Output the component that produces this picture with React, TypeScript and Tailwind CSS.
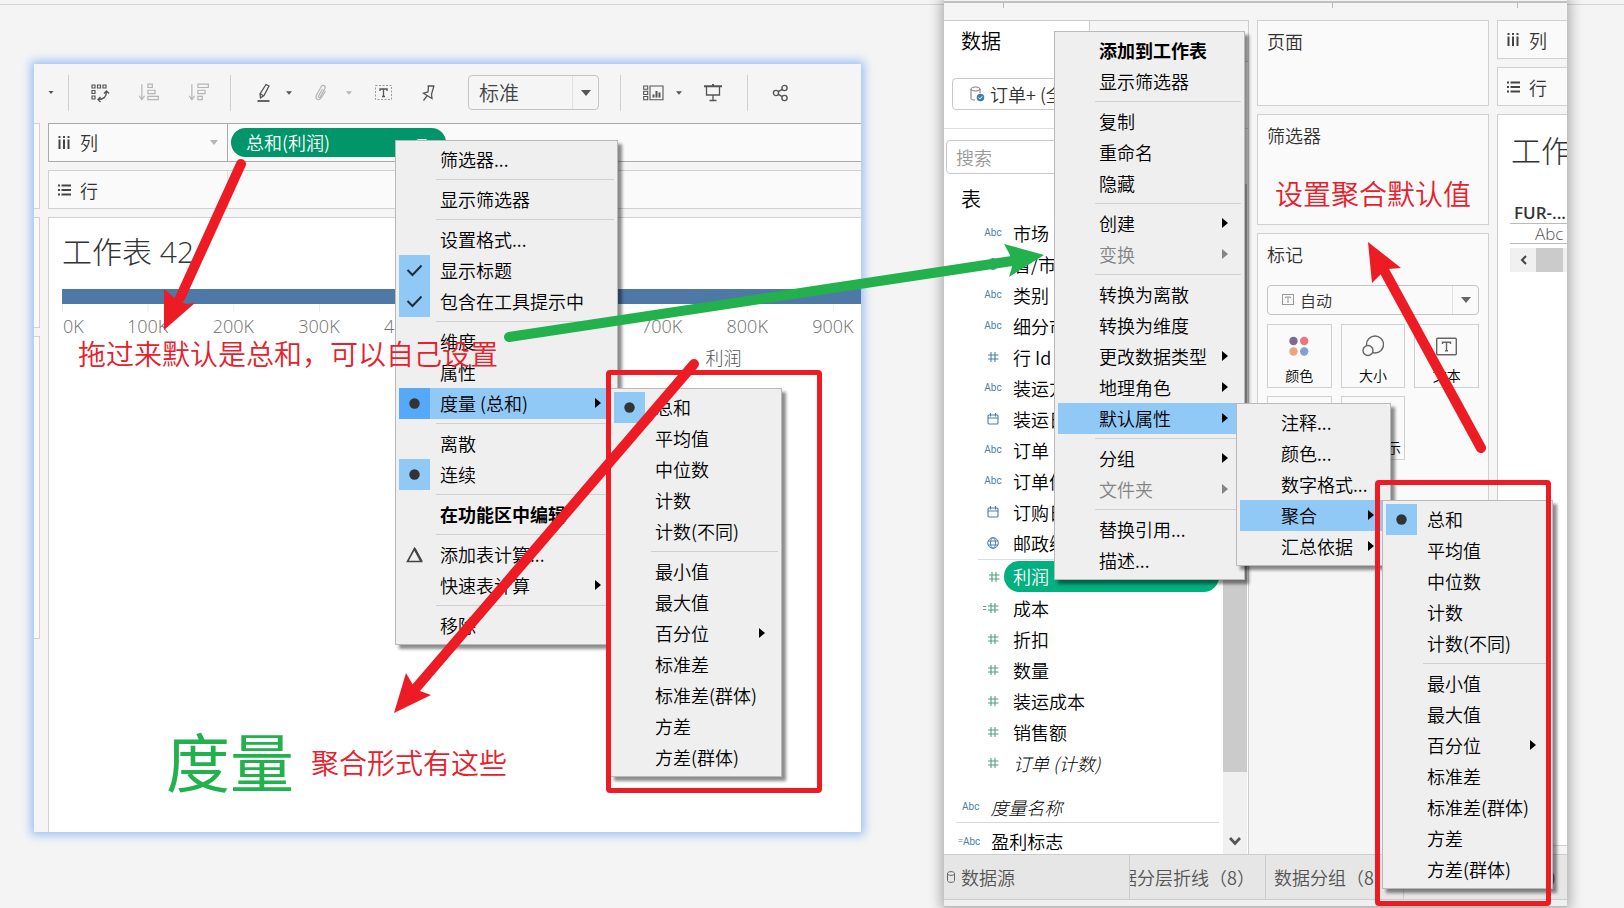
import React from 'react';

const abcBlue = '#4a7fa5';
const hashGreen = '#4fa080';

const aggregations: any[] = [
  { text: '总和', mark: 'dot' },
  { text: '平均值' },
  { text: '中位数' },
  { text: '计数' },
  { text: '计数(不同)' },
  null,
  { text: '最小值' },
  { text: '最大值' },
  { text: '百分位', sub: true },
  { text: '标准差' },
  { text: '标准差(群体)' },
  { text: '方差' },
  { text: '方差(群体)' },
];

const pillMenu: any[] = [
  { text: '筛选器...' },
  null,
  { text: '显示筛选器' },
  null,
  { text: '设置格式...' },
  { text: '显示标题', mark: 'check' },
  { text: '包含在工具提示中', mark: 'check' },
  null,
  { text: '维度' },
  { text: '属性' },
  { text: '度量 (总和)', mark: 'dot', sub: true, active: true },
  null,
  { text: '离散' },
  { text: '连续', mark: 'dot' },
  null,
  { text: '在功能区中编辑', bold: true },
  null,
  { text: '添加表计算...', mark: 'delta' },
  { text: '快速表计算', sub: true },
  null,
  { text: '移除' },
];

const fieldMenu: any[] = [
  { text: '添加到工作表', bold: true },
  { text: '显示筛选器' },
  null,
  { text: '复制' },
  { text: '重命名' },
  { text: '隐藏' },
  null,
  { text: '创建', sub: true },
  { text: '变换', sub: true, disabled: true },
  null,
  { text: '转换为离散' },
  { text: '转换为维度' },
  { text: '更改数据类型', sub: true },
  { text: '地理角色', sub: true },
  { text: '默认属性', sub: true, active: true },
  null,
  { text: '分组', sub: true },
  { text: '文件夹', sub: true, disabled: true },
  null,
  { text: '替换引用...' },
  { text: '描述...' },
];

const defaultsMenu: any[] = [
  { text: '注释...' },
  { text: '颜色...' },
  { text: '数字格式...' },
  { text: '聚合', sub: true, active: true },
  { text: '汇总依据', sub: true },
];

const dimensions = [
  ['abc', '市场'],
  ['globe', '省/市/自治区'],
  ['abc', '类别'],
  ['abc', '细分市场'],
  ['hash', '行 Id'],
  ['abc', '装运方式'],
  ['date', '装运日期'],
  ['abc', '订单 Id'],
  ['abc', '订单优先级'],
  ['date', '订购日期'],
  ['globe', '邮政编码'],
];

const measures = [
  ['calc', '成本'],
  ['hash', '折扣'],
  ['hash', '数量'],
  ['hash', '装运成本'],
  ['hash', '销售额'],
];

const Caret = ({ className = '' }: any) => (
  <svg viewBox="0 0 10 6" className={className} fill="currentColor"><path d="M0 0h10L5 6z" /></svg>
);

const Mark = ({ type }: any) => {
  switch (type) {
    case 'check':
      return <svg width="17" height="13" viewBox="0 0 17 13" fill="none" stroke="#1f2d3a" strokeWidth="2"><path d="M1.5 6l5 5L15.500 1.500" /></svg>;
    case 'dot':
      return <svg width="11" height="11" viewBox="0 0 11 11"><circle cx="5.500" cy="5.500" r="5.200" fill="#333" /></svg>;
    case 'delta':
      return <svg width="17" height="16" viewBox="0 0 17 16" fill="none" stroke="#444" strokeWidth="1.600"><path d="M8.500 1.500L15.500 14.500h-14z" /><path d="M8.500 1.500l7 13" strokeWidth="2.400" /></svg>;
    default:
      return null;
  }
};

const Menu = ({ items, label, className }: any) => (
  <div role="menu" aria-label={label} className={`absolute border border-[#b9b9b9] bg-[#efefef] p-[3px] shadow-[4px_4px_3px_rgba(0,0,0,0.45)] ${className}`}>
    {items.map((item: any, index: any) => {
      if (!item) {
        return <div key={index} role="separator" className="ml-[37px] flex h-[9px] items-center"><span className="h-px w-full bg-[#d0d0d0]" /></div>;
      }
      const markBg = !item.mark || item.mark === 'delta' ? '' : item.active ? 'bg-[#56a9f6]' : 'bg-[#90c8f6]';
      return (
        <button
          key={index}
          role="menuitem"
          disabled={item.disabled}
          className={`flex h-[31px] w-full items-center whitespace-nowrap text-left text-lg ${item.active ? 'bg-[#90c8f6]' : ''} ${item.disabled ? 'text-[#848484]' : 'text-black'} ${item.bold ? 'font-bold' : ''}`}
        >
          <span className={`flex size-[31px] shrink-0 items-center justify-center ${markBg}`}><Mark type={item.mark} /></span>
          <span className="ml-[10px] flex-1 pb-px">{item.text}</span>
          {item.sub && <svg width="6" height="10" viewBox="0 0 6 10" className="mr-[13px] mb-px shrink-0" fill="currentColor"><path d="M0 0l6 5-6 5z" /></svg>}
        </button>
      );
    })}
  </div>
);

const ColumnsIcon = () => (
  <svg width="12" height="13" viewBox="0 0 12 13" fill="#444">
    {[0.5, 5, 9.5].map((x) => <React.Fragment key={x}><rect x={x} y="0" width="2" height="2" /><rect x={x} y="3.500" width="2" height="9.500" /></React.Fragment>)}
  </svg>
);

const RowsIcon = () => (
  <svg width="13" height="12" viewBox="0 0 13 12" fill="#444">
    {[0.5, 5, 9.5].map((y) => <React.Fragment key={y}><rect x="0" y={y} width="2" height="2" /><rect x="3.500" y={y} width="9.500" height="2" /></React.Fragment>)}
  </svg>
);

const FieldIcon = ({ type, color }: any) => {
  if (type === 'abc') return <span className="font-[Roboto,sans-serif] text-[10px] font-normal" style={{ color }}>Abc</span>;
  if (type === 'date') {
    return <svg width="12" height="12" viewBox="0 0 12 12" fill="none" stroke={color} strokeWidth="1.100"><rect x="1" y="2" width="10" height="9" rx="1" /><path d="M1 5h10M3.500 0v3.500M8.500 0v3.500" /></svg>;
  }
  if (type === 'globe') {
    return <svg width="12" height="12" viewBox="0 0 12 12" fill="none" stroke={color}><circle cx="6" cy="6" r="5.300" /><ellipse cx="6" cy="6" rx="2.500" ry="5.300" /><path d="M1 4h10M1 8h10" /></svg>;
  }
  return (
    <svg width="16" height="12" viewBox="-4 0 16 12" className="-ml-1" fill="none" stroke={color} strokeWidth="1.100">
      <path d="M4 1v10M8 1v10M1 4h10.500M1 8h10.500" />
      {type === 'calc' && <path d="M-4 4.500h3M-4 7.500h3" />}
    </svg>
  );
};

const Field = ({ type, text, color }: any) => (
  <li className="flex h-[31px] items-center">
    <span className="flex w-[38px] shrink-0 justify-center"><FieldIcon type={type} color={color} /></span>
    <span className="ml-px whitespace-nowrap text-lg">{text}</span>
  </li>
);

const Divider = () => <div className="h-9 w-px shrink-0 bg-[#cfcfcf]" />;

const Toolbar = () => (
  <div className="flex h-[59px] items-center pb-[2px] text-[#555]">
    <Caret className="h-[3px] w-[6px]" />
    <div className="ml-[14px]"><Divider /></div>
    <div className="ml-[21px] flex items-center gap-7">
      <button aria-label="交换行和列">
        <svg width="20" height="20" viewBox="0 0 20 20" fill="none" stroke="currentColor" strokeWidth="1.200">
          <path d="M2 2h3v3H2zM7.500 2h3v3h-3zM13 2h3v3h-3zM2 7.500h3v3H2zM2 13h3v3H2z" /><path d="M16.500 8.500c0 5-3 8-8.500 8M14 10.500L16.500 8 19 10.500M10.500 14L8 16.500l2.500 2.500" strokeWidth="1.400" />
        </svg>
      </button>
      <button aria-label="升序排序" className="text-[#b5b5b5]">
        <svg width="22" height="22" viewBox="0 0 20 20" fill="none" stroke="currentColor" strokeWidth="1.100"><path d="M3.500 2v13M1 12.500L3.500 16 6 12.500M9 2h4v3H9zM9 7.500h6.500v3H9zM9 13h9.500v3H9z" /></svg>
      </button>
      <button aria-label="降序排序" className="text-[#b5b5b5]">
        <svg width="22" height="22" viewBox="0 0 20 20" fill="none" stroke="currentColor" strokeWidth="1.100"><path d="M3.500 2v13M1 12.500L3.500 16 6 12.500M9 2h9.500v3H9zM9 7.500h6.500v3H9zM9 13h4v3H9z" /></svg>
      </button>
    </div>
    <div className="ml-5"><Divider /></div>
    <button aria-label="突出显示" className="ml-6 flex items-center gap-[13px]">
      <svg width="18" height="20" viewBox="0 0 18 20" fill="none" stroke="currentColor" strokeWidth="1.300"><path d="M11 1.500l3 1.500-5 9.500-3.500 2.300-.5-4zM5 10.800l3.500 2" /><path d="M2.500 18h12" strokeWidth="1.800" /></svg>
      <Caret className="h-[4px] w-[6px]" />
    </button>
    <button aria-label="组成员" className="ml-5 flex items-center gap-4 text-[#b5b5b5]">
      <svg width="18" height="20" viewBox="0 0 18 20" fill="none" stroke="currentColor" strokeWidth="1.200"><path d="M10.500 6l-4 7c-.6 1.500 1 2.200 1.800.9l4.500-8c1.500-3-2-5-3.600-2.200L4.500 12c-2 4 2.500 6.500 5 2.500l4-6.500" /></svg>
      <Caret className="h-[4px] w-[6px]" />
    </button>
    <button aria-label="显示标记标签" className="ml-[22px]">
      <svg width="20" height="18" viewBox="0 0 20 18" fill="none" stroke="currentColor"><rect x="1.500" y="1.500" width="16" height="14" strokeDasharray="2 1.500" stroke="#999" /><path d="M6 7V5h7v2M9.500 5v7.500M8 12.500h3" strokeWidth="1.300" /></svg>
    </button>
    <button aria-label="固定轴" className="ml-[26px]">
      <svg width="18" height="18" viewBox="0 0 18 18" fill="none" stroke="currentColor" strokeWidth="1.300"><path d="M7.500 2h7M8.500 2.200L8 8 3.500 9.200l8.500 5.300-.5-4.200L13.800 2.200M7 11.800L3.500 16.500" /></svg>
    </button>
    <div className="relative ml-[30px]">
      <select aria-label="视图大小" className="h-[35px] w-[131px] appearance-none rounded-sm border border-[#c4c4c4] bg-transparent pl-[10px] text-xl text-[#444]">
        <option>标准</option>
      </select>
      <span className="pointer-events-none absolute inset-y-px right-px flex w-[26px] items-center justify-center border-l border-[#e2e2e2]"><Caret className="h-[6px] w-[10px]" /></span>
    </div>
    <div className="ml-[21px]"><Divider /></div>
    <button aria-label="显示/隐藏卡" className="ml-[22px] flex items-center gap-3">
      <svg width="21" height="16" viewBox="0 0 21 16" fill="none" stroke="currentColor" strokeWidth="1.100"><path d="M.7 1h4v3.200h-4zM.7 6.300h4v3.200h-4zM.7 11.500h4v3.200h-4zM7 1h13v13.700H7z" /><path d="M10.500 12.500v-3M13.500 12.500V6M16.500 12.500v-5" strokeWidth="2" /></svg>
      <Caret className="h-[4px] w-[6px]" />
    </button>
    <button aria-label="演示模式" className="ml-[22px]">
      <svg width="18" height="18" viewBox="0 0 18 18" fill="none" stroke="currentColor" strokeWidth="1.300"><path d="M2.500 2.500v8.500h13V2.500M9 11v5M5.500 16.500h7" /><path d="M0 2.300h18M9 0v2" strokeWidth="2" /></svg>
    </button>
    <div className="ml-[25px]"><Divider /></div>
    <button aria-label="共享" className="ml-6">
      <svg width="17" height="18" viewBox="0 0 17 18" fill="none" stroke="currentColor" strokeWidth="1.400"><circle cx="4" cy="9" r="2.600" /><circle cx="12.500" cy="4" r="2.600" /><circle cx="12.500" cy="14" r="2.600" /><path d="M6.300 7.700l4-2.400M6.300 10.300l4 2.400" /></svg>
    </button>
  </div>
);

const SheetWindow = () => (
  <section className="mt-16 flex min-w-0 flex-[827] self-start bg-[#f5f5f5] shadow-[0_0_9px_3px_rgba(120,175,245,0.75)]">
    <div className="mt-[59px] flex w-[6px] shrink-0 flex-col gap-2">
      <div className="h-[86px] border border-l-0 border-[#dccfc8] bg-[#fafafa]" />
      <div className="h-[111px] border border-l-0 border-[#dccfc8] bg-[#fafafa]" />
      <div className="h-[303px] border border-l-0 border-[#dccfc8] bg-[#fafafa]" />
    </div>
    <div className="ml-2 flex min-w-0 flex-1 flex-col">
      <Toolbar />
      <div className="flex h-[39px] items-stretch border border-r-0 border-[#aaa] bg-[#fafafa]">
        <div className="flex w-[179px] items-center border-r border-[#aaa] px-[9px]">
          <ColumnsIcon />
          <span className="ml-[10px] flex-1 pb-px text-lg text-[#333]">列</span>
          <Caret className="h-[5px] w-[8px] text-[#b5b5b5]" />
        </div>
        <div className="flex items-center pl-[3px]">
          <button className="flex h-[29px] w-[215px] items-center justify-between rounded-full bg-[#00966a] pb-px pl-[15px] pr-[19px] text-lg text-white">
            总和(利润)
            <Caret className="h-[6px] w-[10px]" />
          </button>
        </div>
      </div>
      <div className="mt-2 flex h-[39px] items-stretch border border-r-0 border-[#d0d0d0] bg-[#fafafa]">
        <div className="flex w-[179px] items-center border-r border-[#e2e2e2] pl-[9px]">
          <RowsIcon />
          <span className="ml-[9px] text-lg text-[#333]">行</span>
        </div>
      </div>
      <div className="mt-2 h-[615px] border-l border-t border-[#d0d0d0] bg-white pl-[13px] pt-[14px]">
        <h1 className="font-['Open_Sans','Noto_Sans_CJK_SC',sans-serif] text-[30px] leading-[40px] font-extralight text-[#333]">工作表 42</h1>
        <svg className="mt-[17px] h-[90px] w-full font-['Open_Sans','Noto_Sans_CJK_SC',sans-serif] text-lg font-light" fill="#707070">
          <path d="M.5 15v8" stroke="#e8e8e8" />
          {[1, 2, 3, 4, 5, 6, 7, 8, 9].map((n) => <rect key={n} x={`${n * 10.72}%`} y="15" width="1" height="8" fill="#eee" />)}
          <rect width="100%" height="15" fill="#4e79a7" />
          <text x="1" y="44">0K</text>
          {[1, 2, 3, 4, 7, 8, 9].map((n) => <text key={n} x={`${n * 10.72}%`} y="44" textAnchor="middle">{n}00K</text>)}
          <text x="82.800%" y="76" textAnchor="middle" fill="#555">利润</text>
        </svg>
      </div>
    </div>
  </section>
);

const MarkButton = ({ text, children }: any) => (
  <button className="flex h-16 flex-col items-center justify-between border border-[#d0d0d0] bg-[#fafafa] pb-[2px] pt-[10px] text-sm leading-[20px] text-black">
    {children}
    <span>{text}</span>
  </button>
);

const DataPane = () => (
  <aside className="flex w-[305px] shrink-0 flex-col border-r border-t border-[#ccc] bg-white">
    <div className="flex h-[41px] items-stretch">
      <h2 className="w-[146px] border-r border-[#ccc] pl-[17px] text-xl leading-[40px]">数据</h2>
      <span className="flex-1 border-b border-[#ccc] bg-[#f5f5f5]" />
    </div>
    <div className="border-b border-[#dedede] pb-[18px] pl-2 pr-2 pt-4">
      <button className="flex h-8 w-full items-center rounded-sm border border-[#c8c8c8] pl-[17px] text-lg text-[#333]">
        <svg width="15" height="16" viewBox="0 0 15 16" fill="none" stroke="#777"><path d="M1 3v9.500c0 1 2 1.500 4 1.500M1 3c0-1.200 2-2 4.500-2S10 1.800 10 3 8 5 5.500 5 1 4.200 1 3M10 3v4" /><circle cx="10.500" cy="11.500" r="3.800" fill="#3f7f9f" stroke="none" /><path d="M8.700 11.500l1.300 1.400 2.400-2.600" stroke="#fff" /></svg>
        <span className="ml-[5px]">订单+ (全球)</span>
      </button>
    </div>
    <div className="flex items-center pl-[2px] pr-2 pt-[11px]">
      <input aria-label="搜索" placeholder="搜索" className="h-[34px] w-full rounded-sm border border-[#c8c8c8] pl-[9px] text-lg placeholder:text-[#999]" />
    </div>
    <div className="mt-[10px] flex min-h-0 flex-1">
      <div className="min-w-0 flex-1">
        <h3 className="pl-[17px] text-xl leading-[30px]">表</h3>
        <ul className="ml-[30px] mt-[3px] h-[342px]">
          {dimensions.map(([type, text]) => <Field key={text} type={type} text={text} color={abcBlue} />)}
        </ul>
        <div className="ml-[34px] border-t border-[#d5dee2]" />
        <div className="ml-[30px] mt-px flex h-[31px] items-center">
          <span className="flex w-[30px] shrink-0 justify-end pr-1"><FieldIcon type="hash" color={hashGreen} /></span>
          <span className="flex h-[31px] w-[215px] items-center rounded-full bg-[#00b07f] pl-[9px] pb-px text-lg text-white">利润</span>
        </div>
        <ul className="ml-[30px]">
          {measures.map(([type, text]) => <Field key={text} type={type} text={text} color={hashGreen} />)}
          <Field type="hash" color={hashGreen} text={<em className="font-light">订单 (计数)</em>} />
        </ul>
        <div className="mr-1 ml-3 mt-[13px] border-b border-[#d8d8d8]">
          <div className="flex h-[31px] items-center pl-[6px]"><FieldIcon type="abc" color={abcBlue} /><em className="ml-[11px] text-lg font-light">度量名称</em></div>
        </div>
        <div className="ml-3 flex h-[30px] items-center pl-[2px] pt-[6px]">
          <span className="text-[9px]" style={{ color: abcBlue }}>=</span><FieldIcon type="abc" color={abcBlue} /><span className="ml-[11px] text-lg">盈利标志</span>
        </div>
      </div>
      <div className="mr-px flex w-6 flex-col bg-[#f0f0f0]">
        <span className="h-[588px] bg-[#cbcbcb]" />
        <svg width="12" height="10" viewBox="0 0 12 10" className="mx-auto mb-2 mt-auto" fill="none" stroke="#555" strokeWidth="2.800"><path d="M1 2l5 5.500L11 2" /></svg>
      </div>
    </div>
  </aside>
);

const Cards = () => (
  <div className="ml-2 flex w-[232px] shrink-0 flex-col gap-2 text-lg leading-[27px] text-[#333]">
    <div className="h-[86px] border border-[#d0d0d0] bg-[#fafafa] px-[9px] pt-[7px]">页面</div>
    <div className="h-[111px] border border-[#d0d0d0] bg-[#fafafa] px-[9px] pt-[7px]">筛选器</div>
    <div className="h-[322px] border border-[#d0d0d0] bg-[#fafafa] px-[9px] pt-[7px]">
      标记
      <div className="relative mt-[17px]">
        <select aria-label="标记类型" className="block h-[30px] w-full appearance-none rounded-sm border border-[#c4c4c4] bg-[#fafafa] pl-[32px] text-base leading-[20px] text-[#333]">
          <option>自动</option>
        </select>
        <svg width="12" height="11" viewBox="0 0 12 11" className="pointer-events-none absolute left-[15px] top-[9px]" fill="none" stroke="#999"><rect x=".5" y=".5" width="11" height="10" /><path d="M3.500 4V3h5v1M6 3v5M5 8h2" /></svg>
        <span className="pointer-events-none absolute inset-y-px right-px flex w-[26px] items-center justify-center border-l border-[#e2e2e2] text-[#666]"><Caret className="h-[6px] w-[10px]" /></span>
      </div>
      <div className="mt-[9px] grid grid-cols-3 gap-x-[9px] gap-y-2">
        <MarkButton text="颜色">
          <svg width="20" height="22" viewBox="0 0 20 22"><circle cx="4.500" cy="6" r="4.200" fill="#7b6a92" /><circle cx="15.200" cy="6" r="4.200" fill="#f0747d" /><circle cx="4.500" cy="16.500" r="4.200" fill="#f2a27c" /><circle cx="15.200" cy="16.500" r="4.200" fill="#7fa2d0" /></svg>
        </MarkButton>
        <MarkButton text="大小">
          <svg width="22" height="22" viewBox="0 0 22 22" fill="#fafafa" stroke="#666" strokeWidth="1.400"><circle cx="13" cy="9.500" r="8.500" /><circle cx="6" cy="15.500" r="5" /></svg>
        </MarkButton>
        <MarkButton text="文本">
          <svg width="21" height="22" viewBox="0 0 21 22" fill="none" stroke="#666" strokeWidth="1.400"><rect x=".7" y="3.200" width="19.600" height="16.500" rx="1" /><path d="M6.500 9V7.200h8V9M10.500 7.200v8.600M9 15.800h3" /></svg>
        </MarkButton>
        <MarkButton text="详细信息"><span /></MarkButton>
        <MarkButton text="工具提示"><span /></MarkButton>
      </div>
    </div>
  </div>
);

const PaneWindow = () => (
  <section className="mt-px flex min-w-0 flex-[623] flex-col overflow-hidden border-t-2 border-[#c0c0c0] bg-[#f5f5f5]">
    <div className="flex h-[17px] items-start">
      <span className="ml-[59px] h-[5px] w-px bg-[#bbb]" />
      <span className="ml-[328px] h-[5px] w-px bg-[#bbb]" />
      <span className="ml-[184px] h-[5px] w-px bg-[#bbb]" />
    </div>
    <div className="flex h-[834px]">
      <DataPane />
      <Cards />
      <div className="ml-2 flex min-w-0 flex-1 flex-col text-lg text-[#333]">
        <div className="flex h-[39px] items-center border border-r-0 border-[#d0d0d0] bg-[#fafafa] pl-[9px]"><ColumnsIcon /><span className="ml-[10px]">列</span></div>
        <div className="mt-2 flex h-[39px] items-center border border-r-0 border-[#d0d0d0] bg-[#fafafa] pl-[9px]"><RowsIcon /><span className="ml-[9px]">行</span></div>
        <div className="mb-2 mt-2 flex-1 overflow-hidden border border-r-0 border-[#d0d0d0] bg-white pl-3 pt-[14px] whitespace-nowrap">
          <h2 className="pl-px text-[30px] leading-[40px] font-extralight">工作表 43</h2>
          <div className="mt-[34px] border-b border-[#bbb] pl-1 text-[17px] leading-[20px] font-semibold font-['Open_Sans',sans-serif]">FUR-...</div>
          <div className="border-b border-[#bbb] pl-[25px] text-[17px] leading-[19px] font-light font-['Open_Sans',sans-serif] text-[#555]">Abc</div>
          <div className="mt-1 flex h-6 items-stretch bg-[#f0f0f0]">
            <span className="flex w-[26px] items-center justify-center"><svg width="7" height="10" viewBox="0 0 7 10" fill="none" stroke="#444" strokeWidth="2"><path d="M6 1L2 5l4 4" /></svg></span>
            <span className="w-[27px] bg-[#cbcbcb]" />
          </div>
        </div>
      </div>
    </div>
    <nav className="flex h-[46px] items-stretch border-y border-[#ccc] bg-[#e6e6e6] text-lg whitespace-nowrap text-[#555]">
      <a href="#source" className="flex w-[186px] shrink-0 items-center border-r border-[#ccc] pl-[3px]">
        <svg width="8" height="12" viewBox="0 0 8 12" fill="none" stroke="#666"><path d="M.5 2.500v7c0 2.500 7 2.500 7 0v-7M.5 2.500C.5 0 7.500 0 7.500 2.500S.5 5 .5 2.500" /></svg>
        <span className="ml-[6px]">数据源</span>
      </a>
      <a href="#layers" className="flex w-[136px] shrink-0 items-center justify-end overflow-hidden border-r border-[#ccc] pr-[10px]">据分层折线（8）</a>
      <a href="#groups" className="flex w-[138px] shrink-0 items-center overflow-hidden border-r border-[#ccc] pl-2">数据分组（8）</a>
      <a href="#next" className="flex flex-1 items-center justify-end">（8）</a>
    </nav>
    <div className="h-[7px] border-b border-[#bbb] bg-[#f0f0f0]" />
  </section>
);

const Annotations = () => (
  <>
    <p className="absolute left-[78px] top-[333px] whitespace-nowrap text-[28px] leading-[40px] text-[#e8202c]">拖过来默认是总和，可以自己设置</p>
    <p className="absolute left-[311px] top-[742px] whitespace-nowrap text-[28px] leading-[40px] text-[#e8202c]">聚合形式有这些</p>
    <p className="absolute left-[1275px] top-[173px] whitespace-nowrap text-[28px] leading-[40px] text-[#e8202c]">设置聚合默认值</p>
    <p className="absolute left-[166px] top-[714px] whitespace-nowrap text-[64px] leading-[90px] font-normal text-[#22b14c]">度量</p>
    <div className="absolute left-[606px] top-[370px] h-[423px] w-[216px] rounded-sm border-[5px] border-[#ed1c24]" />
    <div className="absolute left-[1375px] top-[480px] h-[426px] w-[176px] rounded-sm border-[5px] border-[#ed1c24]" />
    <svg className="pointer-events-none absolute left-0 top-0 h-[908px] w-[1624px]" strokeWidth="10" strokeLinecap="round">
      <g stroke="#ed1c24" fill="#ed1c24">
        <path d="M241 164L180 298M694 364L416 688M1481 448L1385 272" />
        <path stroke="none" d="M164 330V289l13 11 9 4 9-1zM394 713l12-40 7 12 7 6 11 4zM1368 242l33 26-13 1-7 5-9 9z" />
      </g>
      <g stroke="#22b14c" fill="#22b14c">
        <path d="M509 337L1012 261" />
        <path stroke="none" d="M1044 255l-40-11 6 11 2 12-3 10z" />
      </g>
    </svg>
  </>
);

const App = () => {
  return (
    <main className="relative flex min-h-screen items-start overflow-hidden bg-[#f4f4f4] pl-[34px] pr-[57px] font-['Noto_Sans_CJK_SC',sans-serif] font-[350] text-black">
      <div className="absolute inset-x-0 top-1 h-px bg-[#d5d5d5]" />
      <SheetWindow />
      <div className="relative ml-[83px] flex min-w-0 flex-[623] shadow-[0_0_12px_3px_rgba(0,0,0,0.3)]">
        <PaneWindow />
      </div>
      <Menu items={pillMenu} label="总和(利润)" className="left-[395px] top-[140px] w-[223px]" />
      <Menu items={aggregations} label="度量" className="left-[610px] top-[388px] w-[172px]" />
      <Menu items={fieldMenu} label="利润" className="left-[1054px] top-[31px] w-[191px]" />
      <Menu items={defaultsMenu} label="默认属性" className="left-[1236px] top-[403px] w-[155px]" />
      <Menu items={aggregations} label="聚合" className="left-[1382px] top-[500px] w-[171px]" />
      <Annotations />
    </main>
  );
};

export default App;
